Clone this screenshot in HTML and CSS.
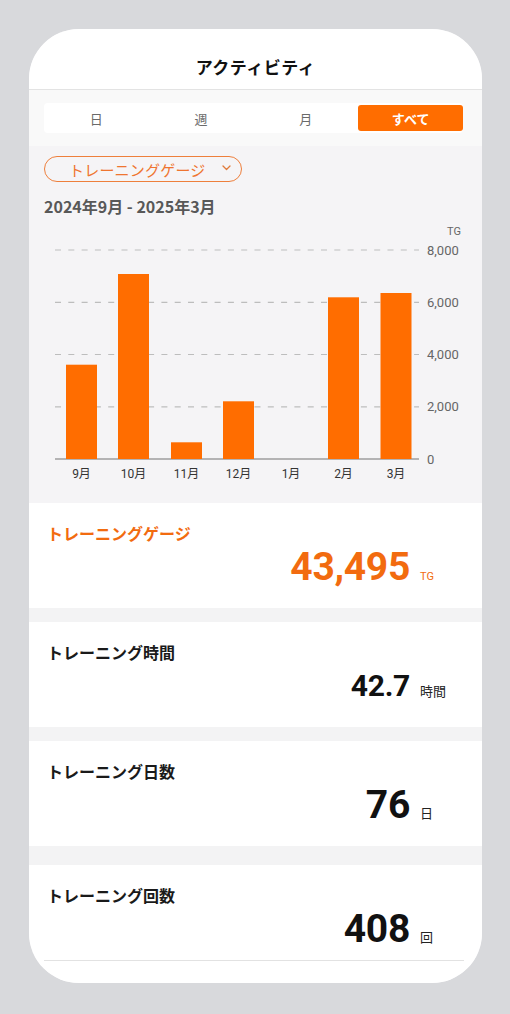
FILE: index.html
```html
<!DOCTYPE html>
<html lang="ja">
<head>
<meta charset="utf-8">
<title>アクティビティ</title>
<link rel="stylesheet" href="styles.css">
</head>
<body>
<div class="phone">
  <header class="header"><h1 class="title">アクティビティ</h1></header>
  <div class="tabs-wrap">
    <div class="tabs">
      <div class="tab">日</div>
      <div class="tab">週</div>
      <div class="tab">月</div>
      <div class="tab active">すべて</div>
    </div>
  </div>
  <section class="chart-area">
    <div class="dropdown">
      <span class="dropdown-label">トレーニングゲージ</span>
      <svg class="chev" width="9" height="6" viewBox="0 0 9 6"><path d="M1 1 L4.5 4.5 L8 1" fill="none" stroke="#e07a3a" stroke-width="1.3" stroke-linecap="round" stroke-linejoin="round"/></svg>
    </div>
    <div class="range">2024年9月 - 2025年3月</div>
    <svg class="chart" width="453" height="286" viewBox="29 218 453 286">
      <text class="unit-label" x="447" y="236">TG</text>
      <g stroke="#bdbdbd" stroke-width="1.2" stroke-dasharray="6 7.3">
        <line x1="55" x2="419" y1="251" y2="251"/>
        <line x1="55" x2="419" y1="303.3" y2="303.3"/>
        <line x1="55" x2="419" y1="355.5" y2="355.5"/>
        <line x1="55" x2="419" y1="407.8" y2="407.8"/>
      </g>
      <line x1="55" x2="419" y1="460" y2="460" stroke="#9e9e9e" stroke-width="1.5"/>
      <g class="ylab">
        <text x="427" y="255.5">8,000</text>
        <text x="427" y="307.8">6,000</text>
        <text x="427" y="360">4,000</text>
        <text x="427" y="412.3">2,000</text>
        <text x="427" y="464.5">0</text>
      </g>
      <g fill="#ff6d00">
        <rect x="66" y="365.7" width="31" height="94.3"/>
        <rect x="118" y="275" width="31" height="185"/>
        <rect x="171" y="443.3" width="31" height="16.7"/>
        <rect x="223" y="402.3" width="31" height="57.7"/>
        <rect x="328" y="298.3" width="31" height="161.7"/>
        <rect x="380.5" y="294" width="31" height="166"/>
      </g>
      <g class="xlab">
        <text x="81.5" y="478.5">9月</text>
        <text x="133.5" y="478.5">10月</text>
        <text x="186.5" y="478.5">11月</text>
        <text x="238.5" y="478.5">12月</text>
        <text x="291" y="478.5">1月</text>
        <text x="343.5" y="478.5">2月</text>
        <text x="396" y="478.5">3月</text>
      </g>
    </svg>
  </section>
  <div class="card">
    <div class="card-label orange">トレーニングゲージ</div>
    <div class="card-value"><span class="num orange">43,495</span><span class="unit orange small">TG</span></div>
  </div>
  <div class="card">
    <div class="card-label">トレーニング時間</div>
    <div class="card-value"><span class="num mid">42.7</span><span class="unit">時間</span></div>
  </div>
  <div class="card">
    <div class="card-label">トレーニング日数</div>
    <div class="card-value"><span class="num">76</span><span class="unit">日</span></div>
  </div>
  <div class="card last">
    <div class="card-label">トレーニング回数</div>
    <div class="card-value"><span class="num">408</span><span class="unit">回</span></div>
    <div class="divider"></div>
  </div>
</div>
</body>
</html>
```

FILE: styles.css
```css
html, body {
  margin: 0;
  padding: 0;
}
body {
  background: #d8d9dc;
  font-family: "Noto Sans CJK JP", "Noto Sans", sans-serif;
  color: #1a1a1a;
}
.phone {
  margin: 29px 0 0 29px;
  width: 453px;
  height: 954px;
  border-radius: 50px;
  overflow: hidden;
  background: #f3f3f4;
}
.header {
  height: 61px;
  background: #fff;
  border-bottom: 1px solid #e3e3e3;
  display: flex;
  justify-content: center;
  align-items: center;
  padding-top: 14px;
  box-sizing: border-box;
}
.title {
  margin: 0;
  font-size: 17px;
  font-weight: 700;
  letter-spacing: 0.5px;
  color: #111;
}
.tabs-wrap {
  background: #f9f9f9;
  padding: 13px 19px 13px 15px;
}
.tabs {
  display: grid;
  grid-template-columns: repeat(4, 1fr);
  height: 30px;
  background: #fff;
  border-radius: 4px;
  padding: 2px 0;
  box-sizing: border-box;
}
.tab {
  display: flex;
  align-items: center;
  justify-content: center;
  font-size: 13px;
  color: #6a6a6a;
}
.tab.active {
  background: #ff6d00;
  color: #fff;
  font-weight: 700;
  border-radius: 3px;
}
.chart-area {
  background: #f5f4f6;
  height: 357px;
  padding-top: 10px;
  box-sizing: border-box;
}
.dropdown {
  margin-left: 15px;
  width: 198px;
  height: 26px;
  box-sizing: border-box;
  border: 1.5px solid #ee7f3c;
  border-radius: 13px;
  display: flex;
  align-items: center;
  padding: 0 10px 0 24px;
}
.dropdown-label {
  flex: 1;
  font-size: 15px;
  color: #ef7530;
  letter-spacing: 0.2px;
}
.chev {
  display: block;
  margin-top: -2px;
}
.range {
  margin: 13px 0 0 15px;
  font-size: 16px;
  line-height: 22px;
  font-weight: 700;
  color: #585858;
}
.chart {
  display: block;
}
.unit-label {
  font-family: Roboto, "Noto Sans", sans-serif;
  font-size: 11px;
  fill: #666;
}
.ylab text {
  font-family: Roboto, "Noto Sans", sans-serif;
  font-size: 13px;
  fill: #666;
}
.xlab text {
  font-family: Roboto, "Noto Sans CJK JP", sans-serif;
  font-size: 12px;
  fill: #333;
  text-anchor: middle;
}
.card {
  background: #fff;
  height: 105px;
  margin-bottom: 14px;
  padding: 19px 0 0 18px;
  box-sizing: border-box;
}
.card:nth-child(6) {
  margin-bottom: 19px;
}
.card.last {
  height: 200px;
  margin-bottom: 0;
}
.card-label {
  font-size: 16px;
  line-height: 22px;
  font-weight: 700;
  color: #1a1a1a;
}
.orange {
  color: #f26b0f !important;
}
.card-value {
  display: flex;
  justify-content: flex-end;
  align-items: baseline;
  padding-right: 18px;
  margin-top: 2px;
  height: 42px;
}
.num {
  font-family: Roboto, "Liberation Sans", sans-serif;
  font-weight: 700;
  font-size: 39px;
  line-height: 42px;
  letter-spacing: -0.3px;
  color: #111;
}
.num.mid {
  font-size: 30px;
}
.unit {
  width: 44px;
  margin-left: 10px;
  font-size: 13px;
  color: #222;
}
.unit.small {
  font-family: Roboto, sans-serif;
  font-size: 11px;
}
.divider {
  margin: 10px 18px 0 -3px;
  height: 1px;
  background: #e2e2e2;
}
```
